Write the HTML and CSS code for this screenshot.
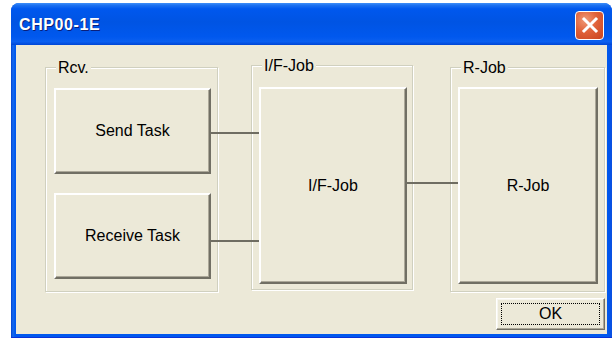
FILE: index.html
```html
<!DOCTYPE html>
<html>
<head>
<meta charset="utf-8">
<link rel="stylesheet" href="styles.css">
</head>
<body>
<div class="window">
  <div class="titlebar">
    <span class="title">CHP00-1E</span>
    <div class="close" aria-label="Close">
      <svg width="20" height="20" viewBox="0 0 20 20"><path d="M4 4 L16 16 M16 4 L4 16" stroke="#fff" stroke-width="3" stroke-linecap="square"/></svg>
    </div>
  </div>
  <div class="client">
    <div class="groups">
      <div class="group rcv">
        <span class="legend">Rcv.</span>
        <div class="btn send link">Send Task</div>
        <div class="btn recv link">Receive Task</div>
      </div>
      <div class="group ifjob">
        <span class="legend">I/F-Job</span>
        <div class="btn big ifbtn link">I/F-Job</div>
      </div>
      <div class="group rjob">
        <span class="legend">R-Job</span>
        <div class="btn big rbtn">R-Job</div>
      </div>
    </div>
    <div class="footer">
      <div class="ok"><span class="focus">OK</span></div>
    </div>
  </div>
</div>
</body>
</html>
```
FILE: styles.css
```css
* { box-sizing: border-box; }
html, body { margin: 0; padding: 0; background: #fff; }
body {
  width: 616px;
  height: 339px;
  padding: 3px 0 0 11px;
  font-family: "Liberation Sans", Arial, sans-serif;
  overflow: hidden;
}
.window {
  width: 601px;
  height: 335px;
  border-radius: 8px 8px 0 0;
  display: flex;
  flex-direction: column;
  padding: 0 5px 4px 5px;
  background: linear-gradient(90deg, #0041d0 0, #166aee 2px, #0058ee 4px, #0058ee calc(100% - 4px), #0b4fe0 100%);
  box-shadow: inset 0 -1px #0831d9;
}
.titlebar {
  height: 42px;
  margin: 0 -5px;
  border-radius: 8px 8px 0 0;
  background: linear-gradient(#3d8ef9 0%, #1a6ff0 6%, #0058ee 14%, #0054e3 45%, #0058ee 80%, #0a5ff0 92%, #0046d5 100%);
  display: flex;
  align-items: center;
  padding: 0 8px 0 8px;
}
.title {
  color: #fff;
  font-weight: bold;
  font-size: 16px;
  letter-spacing: 0.6px;
  line-height: 16px;
  margin-top: 2px;
  text-shadow: 1px 1px 0 #0a1f7a;
  flex: 1;
}
.close {
  width: 29px;
  height: 29px;
  margin-top: 2px;
  border: 1px solid #fff;
  border-radius: 4px;
  background: radial-gradient(circle at 35% 30%, #f09a78 0%, #e0623a 45%, #c9441f 100%);
  display: flex;
  align-items: center;
  justify-content: center;
}
.client {
  flex: 1;
  background: #ece9d8;
  padding: 20px 0 0 29px;
  display: flex;
  flex-direction: column;
}
.groups {
  display: flex;
  align-items: flex-start;
}
.group {
  position: relative;
  height: 225px;
  border: 1px solid #d0d0bf;
  box-shadow: inset 1px 1px #fff, 1px 1px #fff;
}
.legend {
  position: absolute;
  top: -9px;
  left: 10px;
  padding: 0 2px;
  background: #ece9d8;
  font-size: 16px;
  line-height: 18px;
  color: #000;
}
.rcv {
  width: 173px;
  margin-top: 2px;
  padding: 20px 0 0 8px;
}
.ifjob {
  width: 162px;
  margin-left: 33px;
  padding: 21px 0 0 7px;
}
.rjob {
  width: 155px;
  margin-left: 37px;
  margin-top: 2px;
  padding: 19px 0 0 7px;
}
.btn {
  position: relative;
  background: #ece9d8;
  border: 2px solid;
  border-color: #fff #716f64 #716f64 #fff;
  box-shadow: inset -1px -1px #aca899;
  display: flex;
  align-items: center;
  justify-content: center;
  font-size: 16px;
  color: #000;
}
.send, .recv { width: 157px; height: 86px; }
.recv { margin-top: 19px; }
.big { height: 197px; }
.ifbtn { width: 148px; }
.rbtn { width: 140px; }
.link::after {
  content: "";
  position: absolute;
  z-index: 2;
  left: calc(100% + 2px);
  height: 2px;
  background: #6f6d62;
}
.send::after { top: 42px; width: 48px; }
.recv::after { top: 45px; width: 48px; }
.ifbtn::after { top: 93px; width: 51px; }
.footer {
  display: flex;
  justify-content: flex-end;
  padding-right: 2px;
  margin-top: 6px;
}
.ok {
  width: 109px;
  height: 32px;
  background: #ece9d8;
  border: 1px solid;
  border-color: #fff #716f64 #716f64 #fff;
  box-shadow: inset -1px -1px #aca899, inset 1px 1px #f7f6f0;
  padding: 4px;
  display: flex;
}
.focus {
  flex: 1;
  border: 1px dotted #000;
  display: flex;
  align-items: center;
  justify-content: center;
  font-size: 16px;
  color: #000;
}
```
